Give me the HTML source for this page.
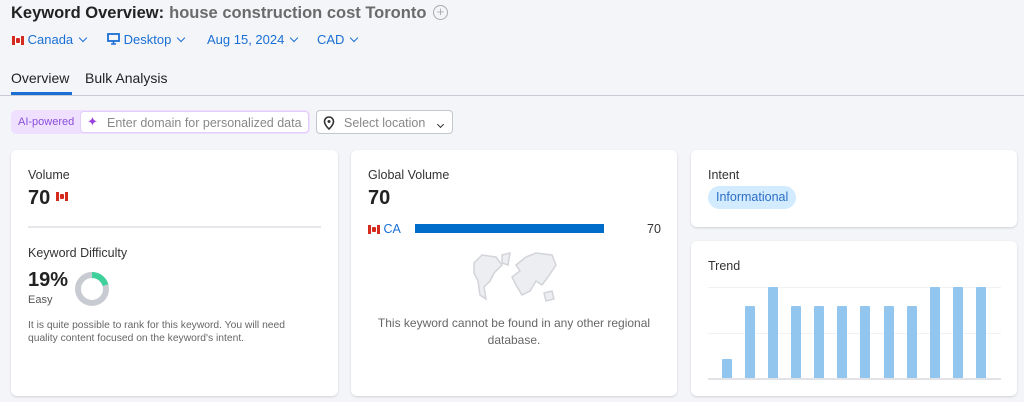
<!DOCTYPE html>
<html><head><style>
*{margin:0;padding:0;box-sizing:border-box}
body{width:1024px;height:402px;overflow:hidden;background:#f4f5f9;font-family:"Liberation Sans",sans-serif;color:#333;position:relative}
.a{position:absolute;white-space:nowrap}
.card{position:absolute;background:#fff;border-radius:6px;box-shadow:0 1px 2px rgba(0,0,0,.15)}
.flag{display:inline-block;width:12px;height:9px;background:linear-gradient(90deg,#d52b1e 0 3px,#fff 3px 9px,#d52b1e 9px);position:relative;vertical-align:middle}
.flag:after{content:"";position:absolute;left:4px;top:2px;width:4px;height:5px;background:#d52b1e;border-radius:1px}
.blue{color:#1a6fd4}
.chev{display:inline-block;width:6px;height:6px;border-right:1.6px solid currentColor;border-bottom:1.6px solid currentColor;transform:rotate(45deg);margin-left:7px;position:relative;top:-3px}
.bar{position:absolute;width:10px;background:#93c6ee;border-radius:1px 1px 0 0}
</style></head><body>
<div class="a" style="left:11px;top:4px;font-size:16.5px;font-weight:bold;color:#222">Keyword Overview:<span style="color:#6b6b6b;margin-left:5px">house construction cost Toronto</span></div>
<div class="a" style="left:433px;top:5px;width:15px;height:15px;border:1.3px solid #aaa;border-radius:50%;color:#aaa;font-size:13px;line-height:12px;text-align:center">+</div>
<div class="a blue" style="left:12px;top:32px;font-size:13px"><span class="flag"></span> Canada<span class="chev"></span></div>
<div class="a blue" style="left:107px;top:32px;font-size:13px"><svg width="13" height="12" style="vertical-align:-1px"><rect x="1" y="1" width="11" height="7" fill="none" stroke="#1a6fd4" stroke-width="1.8"/><path d="M4 11h5M6.5 8v3" stroke="#1a6fd4" stroke-width="1.6"/></svg> Desktop<span class="chev"></span></div>
<div class="a blue" style="left:207px;top:32px;font-size:13px">Aug 15, 2024<span class="chev"></span></div>
<div class="a blue" style="left:317px;top:32px;font-size:13px">CAD<span class="chev"></span></div>
<div class="a" style="left:11px;top:70px;font-size:14px;color:#222">Overview</div>
<div class="a" style="left:11px;top:92px;width:61px;height:3px;background:#1a6fd4"></div>
<div class="a" style="left:85px;top:70px;font-size:14px;color:#222">Bulk Analysis</div>
<div class="a" style="left:0;top:95px;width:1024px;height:1px;background:#c8cbd3"></div>
<div class="a" style="left:11px;top:110px;width:299px;height:24px;background:#efe0ff;border-radius:5px"></div>
<div class="a" style="left:18px;top:116px;font-size:11px;color:#8a4ed9">AI-powered</div>
<div class="a" style="left:80px;top:111px;width:229px;height:22px;background:#fff;border:1px solid #e2cdfb;border-radius:4px"></div>
<div class="a" style="left:87px;top:114px;font-size:13px;color:#9a42e0">✦</div>
<div class="a" style="left:107px;top:116px;font-size:12.5px;color:#888">Enter domain for personalized data</div>
<div class="a" style="left:316px;top:110px;width:137px;height:24px;background:#fff;border:1px solid #c3c6cc;border-radius:4px"></div>
<div class="a" style="left:323px;top:116px"><svg width="12" height="14"><path d="M6 1a4.5 4.5 0 0 1 4.5 4.5C10.5 9 6 13 6 13S1.5 9 1.5 5.5A4.5 4.5 0 0 1 6 1z" fill="none" stroke="#333" stroke-width="1.6"/><circle cx="6" cy="5.5" r="1.5" fill="#333"/></svg></div>
<div class="a" style="left:344px;top:116px;font-size:12.5px;color:#888">Select location</div>
<div class="a" style="left:438px;top:117px;color:#333"><span class="chev" style="margin:0;width:5px;height:5px"></span></div>

<div class="card" style="left:11px;top:150px;width:327px;height:246px"></div>
<div class="a" style="left:28px;top:168px;font-size:12.5px">Volume</div>
<div class="a" style="left:28px;top:187px;font-size:20px;font-weight:bold;color:#222">70 <span class="flag" style="vertical-align:3px"></span></div>
<div class="a" style="left:28px;top:226px;width:293px;height:2px;background:#e6e7eb"></div>
<div class="a" style="left:28px;top:246px;font-size:12.5px">Keyword Difficulty</div>
<div class="a" style="left:28px;top:269px;font-size:20px;font-weight:bold;color:#222">19%</div>
<div class="a" style="left:28px;top:294px;font-size:11px;color:#555">Easy</div>
<svg class="a" style="left:74px;top:271px" width="36" height="36"><circle cx="18" cy="18" r="14" fill="none" stroke="#c9cbd2" stroke-width="6"/><circle cx="18" cy="18" r="14" fill="none" stroke="#3fd19b" stroke-width="6" stroke-dasharray="18 100" transform="rotate(-90 18 18)"/></svg>
<div class="a" style="left:28px;top:319px;font-size:10.3px;color:#666;line-height:13px">It is quite possible to rank for this keyword. You will need<br>quality content focused on the keyword's intent.</div>

<div class="card" style="left:351px;top:150px;width:326px;height:246px"></div>
<div class="a" style="left:368px;top:168px;font-size:12.5px">Global Volume</div>
<div class="a" style="left:368px;top:187px;font-size:20px;font-weight:bold;color:#222">70</div>
<div class="a" style="left:368px;top:222px;font-size:12.5px;color:#1a6fd4"><span class="flag"></span> CA</div>
<div class="a" style="left:415px;top:224px;width:189px;height:9px;background:#006dca"></div>
<div class="a" style="left:647px;top:222px;font-size:12.5px">70</div>
<svg class="a" style="left:472px;top:251px" width="86" height="54"><g fill="#eceef1" stroke="#d2d4d9" stroke-width="1.5"><path d="M2 12 10 4 24 6 30 14 22 22 18 30 12 36 14 48 8 44 6 30 2 22z"/><path d="M30 4 38 2 36 14 30 12z"/><path d="M44 14 54 6 64 2 80 4 84 14 76 26 70 34 64 30 58 40 50 44 44 34 40 26 48 20z"/><path d="M72 42 80 40 82 48 74 50z"/></g></svg>
<div class="a" style="left:351px;top:315px;width:326px;text-align:center;font-size:12px;color:#666;line-height:17px;white-space:normal">This keyword cannot be found in any other regional<br>database.</div>

<div class="card" style="left:691px;top:150px;width:326px;height:77px"></div>
<div class="a" style="left:708px;top:168px;font-size:12.5px">Intent</div>
<div class="a" style="left:708px;top:186px;height:23px;padding:0 8px;background:#d2ebff;border-radius:12px;font-size:12.5px;line-height:23px;color:#2d6ec6">Informational</div>

<div class="card" style="left:691px;top:241px;width:326px;height:155px"></div>
<div class="a" style="left:708px;top:259px;font-size:12.5px">Trend</div>
<div class="a" style="left:708px;top:287px;width:293px;height:1px;background:#f1f2f4"></div>
<div class="a" style="left:708px;top:333px;width:293px;height:1px;background:#f1f2f4"></div>
<div class="a" style="left:708px;top:378px;width:293px;height:2px;background:#e2e3e7"></div>
<div class="bar" style="left:722px;top:359px;height:19px"></div>
<div class="bar" style="left:745px;top:306px;height:72px"></div>
<div class="bar" style="left:768px;top:287px;height:91px"></div>
<div class="bar" style="left:791px;top:306px;height:72px"></div>
<div class="bar" style="left:814px;top:306px;height:72px"></div>
<div class="bar" style="left:837px;top:306px;height:72px"></div>
<div class="bar" style="left:860px;top:306px;height:72px"></div>
<div class="bar" style="left:884px;top:306px;height:72px"></div>
<div class="bar" style="left:907px;top:306px;height:72px"></div>
<div class="bar" style="left:930px;top:287px;height:91px"></div>
<div class="bar" style="left:953px;top:287px;height:91px"></div>
<div class="bar" style="left:976px;top:287px;height:91px"></div>
</body></html>
